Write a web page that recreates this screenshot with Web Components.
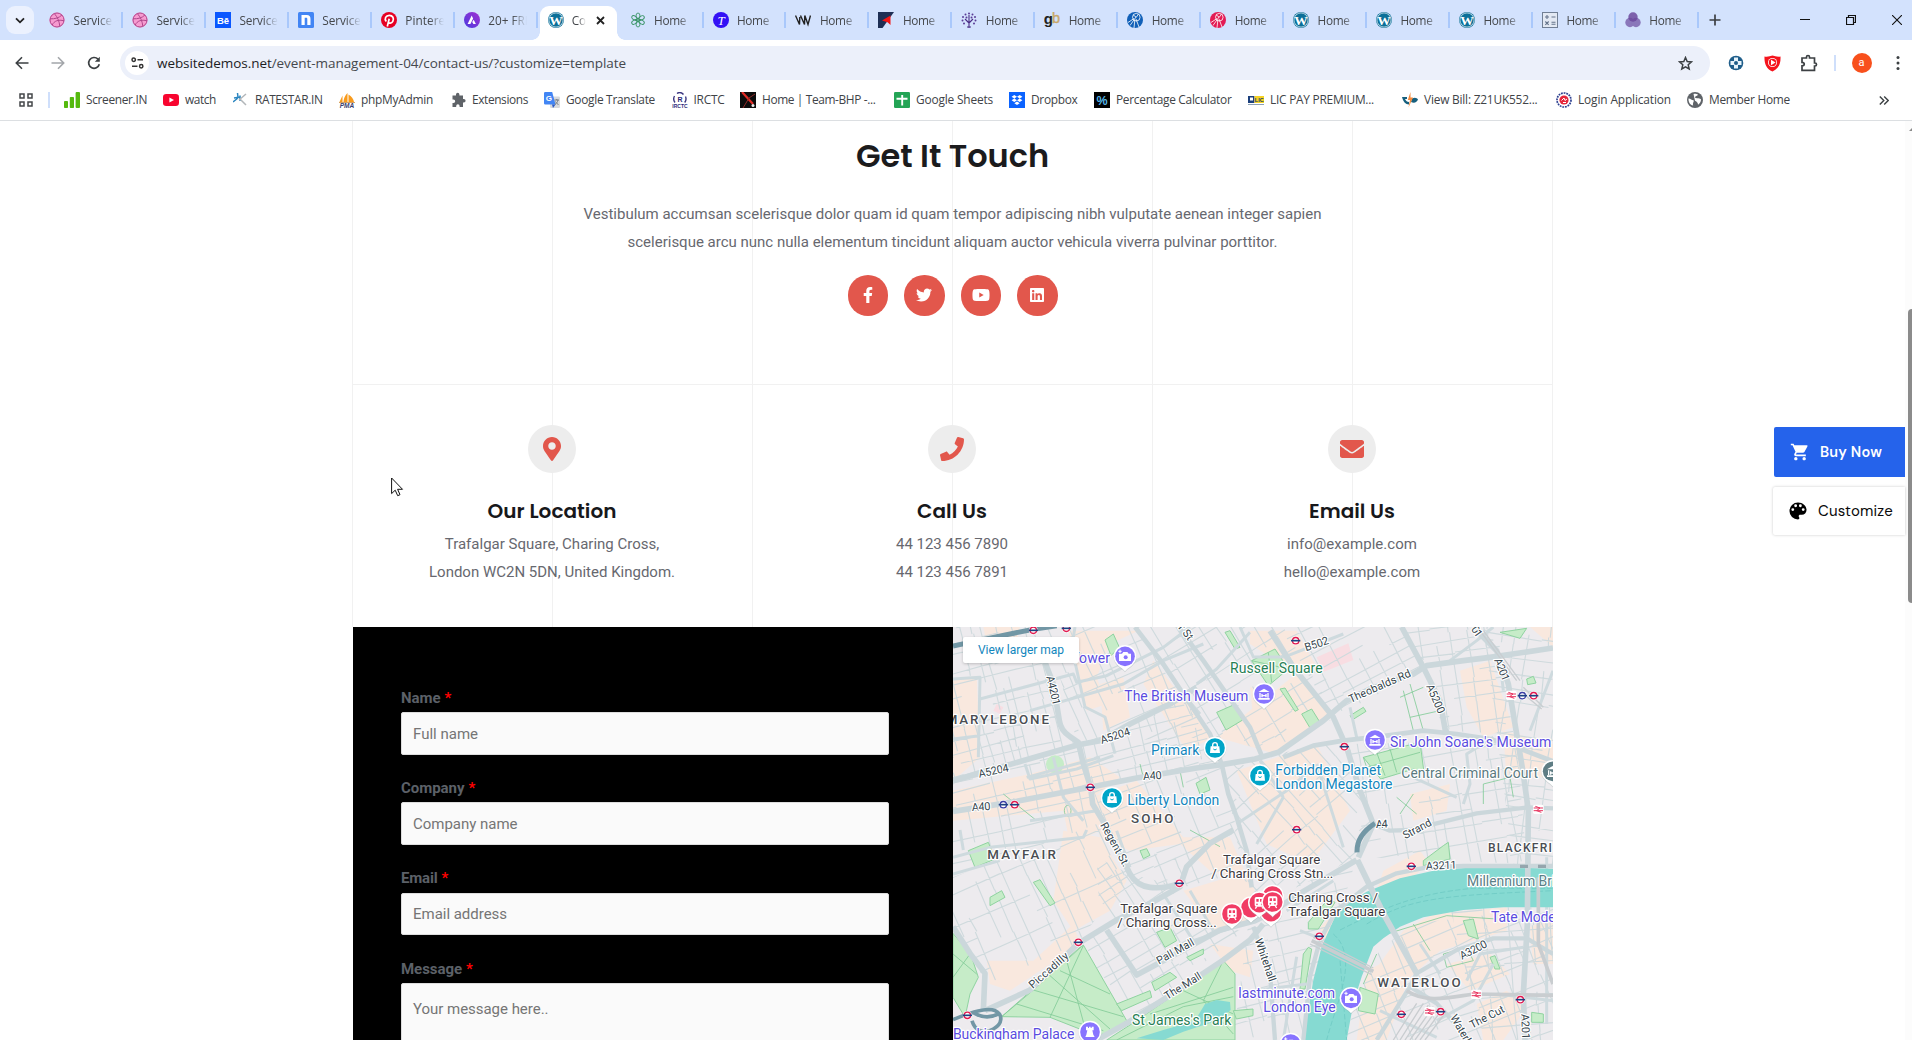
<!DOCTYPE html>
<html lang="en">
<head>
<meta charset="utf-8">
<title>Contact Us</title>
<style>
html,body{margin:0;height:1040px;overflow:hidden;background:#fff}
body{font-family:Roboto,"Liberation Sans",sans-serif}
</style>
</head>
<body>
<browser-window></browser-window>
<script>
const UI = '"Open Sans","Noto Sans",sans-serif';

/* Base element: renders markup in an open shadow root and tracks out nowrap text to its design width. */
class Base extends HTMLElement {
  connectedCallback() {
    if (!this.shadowRoot) this.attachShadow({mode: 'open'});
    this.shadowRoot.innerHTML = '<style>*{box-sizing:border-box}svg{display:block}' + this.css() + '</style>' + this.html();
    this.shadowRoot.querySelectorAll('[data-w]').forEach(el => {
      const w = +el.dataset.w, n = el.textContent.length;
      el.style.whiteSpace = 'nowrap';
      const nat = el.getBoundingClientRect().width;
      if (nat) el.style.letterSpacing = ((w - nat) / n).toFixed(3) + 'px';
    });
  }
  css() { return ''; }
  html() { return ''; }
}

const svg = (s, vb = '0 0 16 16') => `<svg width="16" height="16" viewBox="${vb}">${s}</svg>`;
const txt = (t, x, y, size, fill, fam, w = 700, extra = '') => `<text x="${x}" y="${y}" font-size="${size}" fill="${fill}" font-family="${fam}" font-weight="${w}" text-anchor="middle" ${extra}>${t}</text>`;
const ball = (bg, fg) => `<circle cx="8" cy="8" r="7.6" fill="${bg}"/><g fill="none" stroke="${fg}" stroke-width="1"><circle cx="8" cy="8" r="7"/><path d="M5.3 1.6C8.5 5 10.3 9 10.8 14.3M1.1 6.8C6 7 10 6 12.9 3M3.2 13C5.2 8.8 9.5 7.3 15 8.8"/></g>`;
const wp = () => `<circle cx="8" cy="8" r="8" fill="#0b6f98"/><circle cx="8" cy="8" r="7.1" fill="none" stroke="#fff" stroke-width=".7"/>` + txt('W', 8, 13, 13.5, '#fff', 'Liberation Serif');
const globe2 = c => `<circle cx="8" cy="8" r="8" fill="${c}"/><g fill="none" stroke="#fff" stroke-width=".8"><circle cx="9.300" cy="5.200" r="3.800"/><path d="M1 10.500 7 6.500M3 13.500 9 5M7 16 7.800 8M12 15 9 7M9.300 5.200 6 2.800M9.300 5.200 11.500 2"/></g>`;
const ICONS = {
  dribbble: svg(ball('#f79bd0', '#b0478d')),
  behance: svg('<rect width="16" height="16" fill="#0a57ff"/>' + txt('Bē', 8, 11.6, 9.5, '#fff', 'Liberation Sans')),
  namecheap: svg('<rect width="16" height="16" rx="1.5" fill="#4285f4"/><path d="M3.500 13V3H8.700C11.400 3 12.500 4.500 12.500 7V13H9.300V7.200C9.300 6.200 9 5.800 8.200 5.800H6.700V13Z" fill="#fff"/>'),
  pinterest: svg('<circle cx="8" cy="8" r="8" fill="#e60023"/><path d="M6.300 14.500 8.200 6.800M5.300 9.500C3 6.800 4.800 3.300 8.300 3.300c3.500 0 5 3.200 3.500 6-1.200 2.200-3.800 2.200-4.400.7" fill="none" stroke="#fff" stroke-width="1.700"/>'),
  astra: svg('<defs><linearGradient id="ag" x1="0" y1="1" x2="1" y2="0"><stop stop-color="#4a3be0"/><stop offset="1" stop-color="#a22fd0"/></linearGradient></defs><circle cx="8" cy="8" r="8" fill="url(#ag)"/><path d="M3.600 12 7.700 3.600 9.100 6.500 6.400 12ZM9.700 7.700 11.900 12H9.400L8.200 9.900Z" fill="#fff"/>'),
  wp: svg(wp()),
  atom: svg('<g fill="none" stroke="#3a9468" stroke-width=".9"><ellipse cx="8" cy="4" rx="2" ry="3"/><ellipse cx="8" cy="12" rx="2" ry="3"/><ellipse cx="4.500" cy="6" rx="2" ry="3" transform="rotate(-60 4.500 6)"/><ellipse cx="11.500" cy="6" rx="2" ry="3" transform="rotate(60 11.500 6)"/><ellipse cx="4.500" cy="10" rx="2" ry="3" transform="rotate(60 4.500 10)"/><ellipse cx="11.500" cy="10" rx="2" ry="3" transform="rotate(-60 11.500 10)"/><circle cx="8" cy="8" r="1.600"/></g>'),
  tee: svg('<circle cx="8" cy="8" r="8" fill="#3311f5"/>' + txt('T', 8, 12.600, 13, '#fff', 'Liberation Serif', 400, 'font-style="italic"')),
  vv: svg('<path d="M.5 3.500 4.500 12.500 4.800 5M5.500 3.500 9.500 12.500 9.800 3.500M9.800 3.500 13 12.500 15.500 3.500" fill="none" stroke="#222" stroke-width="1.400"/>'),
  kite: svg('<path d="M0 0h16L4.500 16H0Z" fill="#1e2f55"/><path d="M4 8.500 12.500 3.500V13L9.500 10.200Z" fill="#f01616"/>'),
  tree: svg('<g stroke="#4a2e86" stroke-width="1.100" fill="none"><path d="M8 7v9M8 11 4 7M8 11l4-4M8 9V3M6 15h4"/></g><g fill="#5a3c96"><circle cx="8" cy="1.500" r="1"/><circle cx="4.500" cy="2.500" r="1"/><circle cx="11.500" cy="2.500" r="1"/><circle cx="2" cy="5" r="1"/><circle cx="14" cy="5" r="1"/><circle cx="1.500" cy="8.500" r="1"/><circle cx="14.500" cy="8.500" r="1"/><circle cx="5.500" cy="5.500" r="1"/><circle cx="10.500" cy="5.500" r="1"/><circle cx="3" cy="11.500" r="1"/><circle cx="13" cy="11.500" r="1"/></g>'),
  gb: svg(txt('g', 4.200, 11.500, 15, '#222', 'Liberation Sans') + txt('b', 12, 11, 14.500, '#c9a86a', 'Liberation Sans', 400, 'stroke="#c9a86a" stroke-width=".4"')),
  gblue: svg(globe2('#1160b8')),
  gred: svg(globe2('#e31b54')),
  calc: svg('<rect x=".5" y=".5" width="15" height="15" fill="#e3e9f3" stroke="#717f94"/><path d="M3 5h4M5 3v4M9.500 5h4M3.300 9.500l3.400 3.400M6.700 9.500l-3.400 3.400M9.500 10.300h4M9.500 12.300h4" stroke="#66758c" stroke-width="1.100"/>'),
  venn: svg('<g fill="#6c4a9e" opacity=".85"><circle cx="8" cy="5" r="4.700"/></g><g fill="#6c4a9e" opacity=".7"><circle cx="5" cy="10.500" r="4.700"/><circle cx="11" cy="10.500" r="4.700"/></g>'),
  screener: svg('<g fill="#55b90e"><rect x="0" y="9" width="4" height="7" rx=".8"/><rect x="5.800" y="5" width="4.200" height="11" rx=".8"/><rect x="11.600" y="0" width="4.400" height="16" rx="1"/></g>'),
  yt: svg('<rect y="2" width="16" height="12" rx="3.200" fill="#f8052f"/><path d="M6.400 5.400v5.200L11 8Z" fill="#fff"/>'),
  rate: svg('<path d="M4.500 1 5 5.500M1 6l6-1M0 10l5-4M7 3.500V9" stroke="#2c86c0" stroke-width="1.500" fill="none"/><path d="M6 8l7-6M7 7l6 6" stroke="#b3b7ba" stroke-width="1.500"/>'),
  pma: svg('<path d="M3.500 10V3.500L.5 10ZM8.500 10V1C6 3.500 4.500 7 4.500 10ZM9.500 10V2.500C12.500 4 14.500 7 15 10Z" fill="#f89b1d"/><path d="M0 10.500h16" stroke="#c9893a" stroke-width=".8"/>' + txt('PMA', 8, 16, 6.500, '#38406e', 'Liberation Sans', 700, 'font-style="italic"')),
  puzzle: svg('<path d="M6 2.500a1.700 1.700 0 0 1 3.400 0V3.500H13V7h.8a1.800 1.800 0 0 1 0 3.600H13V15H9.600v-1a1.700 1.700 0 0 0-3.400 0v1H2.500v-4h1a1.700 1.700 0 0 0 0-3.400h-1v-4H6Z" fill="#5f6368"/>'),
  gtr: svg('<rect x="6" y="4.500" width="10" height="11.500" rx="1.200" fill="#d8dadd"/><path d="M1.200 0h7l3.300 12.500H1.200A1.200 1.200 0 0 1 0 11.300V1.200A1.200 1.200 0 0 1 1.200 0Z" fill="#4285f4"/><path d="M8 12.500h3.500L9 16Z" fill="#2b59c3"/>' + txt('G', 4.800, 9, 8, '#fff', 'Liberation Sans') + '<path d="M10.500 8h4.500M12.800 7v1M14 8c-.5 2-1.500 3.500-3 4.500M11.500 9.500c.8 1.500 2 2.700 3 3" stroke="#6d7378" stroke-width=".9" fill="none"/>'),
  irctc: svg('<g fill="none" stroke="#3b3680" stroke-width="1.400"><path d="M5 1.500A5 5 0 0 1 11.500 2.500M2.500 4A6 6 0 0 0 3 10.500M13.500 4.500a6 6 0 0 1-.8 6"/></g>' + txt('R', 8, 9.800, 7, '#2b2a7a', 'Liberation Sans') + txt('IRCTC', 8, 16, 5, '#2b2a7a', 'Liberation Sans')),
  bhp: svg('<rect width="16" height="16" fill="#0c0c0c"/><path d="M2 0 13 12" stroke="#e02c26" stroke-width="2.200"/><path d="M15 2 9 6 3 16" stroke="#8d2a27" stroke-width="1" fill="none"/><circle cx="13" cy="13.500" r="1.500" fill="#eee"/>'),
  sheets: svg('<rect width="16" height="16" rx="1.300" fill="#23a455"/><path d="M8.200 3v10.500M2.500 6.800h11" stroke="#fff" stroke-width="1.900"/>'),
  dropbox: svg('<rect width="16" height="16" fill="#0b63ff"/><path d="m5.300 3 2.700 1.700-2.700 1.700L2.600 4.700ZM10.700 3l2.700 1.700-2.700 1.700L8 4.700ZM5.300 6.500 8 8.200 5.300 9.900 2.600 8.200ZM10.700 6.500l2.700 1.700-2.700 1.700L8 8.200ZM8 9.500l2.700 1.700L8 12.900l-2.700-1.700Z" fill="#fff"/>'),
  pct: svg('<rect width="16" height="16" fill="#000"/>' + txt('%', 8, 12.500, 12.500, '#56b8ea', 'Liberation Sans')),
  lic: svg('<rect y="4" width="6.500" height="7" fill="#1b3f7c"/><rect x="2" y="5.500" width="3" height="3" fill="#fff"/><rect x="6.500" y="4" width="9.500" height="7" fill="#f6d223"/>' + txt('LIC', 11.300, 10, 5.500, '#14386f', 'Liberation Sans') + '<path d="M0 12.500h16" stroke="#8aa0b5" stroke-width="1"/>'),
  bill: svg('<path d="M0 5h5v2H3c1 2 2 3 4 3v2.500C3.500 12.500 1 9.500 0 5ZM10 6.500c3-1.500 5-.5 6 1-1 3-4 4-7 2.500Z" fill="#17607e"/><path d="M8.500 0 5.800 8H8L6.500 15.500 11 5.500H8.500Z" fill="#f68b3d"/>'),
  login: svg('<circle cx="8" cy="8" r="7" fill="#fff" stroke="#2c3f8f" stroke-width="1.700" stroke-dasharray="1.800 .9"/><circle cx="8" cy="8" r="4.600" fill="#e5263b"/><path d="M5.500 8.500 8 6l1 2.500 2-1.500M7 10.500h3" stroke="#fff" fill="none"/>'),
  world: svg('<circle cx="8" cy="8" r="8" fill="#5f6368"/><path d="M1.500 6.500c2.500 0 3 1.800 5 1.800 1 1.500-1.200 2.300-.3 5.200C3 13 1.300 10 1.500 6.500ZM6.500 2c1.500-.5 3.500 0 4.500.8-.5 1.500-3 1.200-3 2.700 1.500 1.500 3.800-.2 6 1.700.2 2.500-1.300 4.500-3 5.600 0-2-1-3-3-4" fill="#fff"/>'),
};

class TabItem extends Base {
  css() { const a = this.hasAttribute('active'); return `
    :host{display:flex;width:82.950px;height:40px;flex:none;font:12px/15px ${UI};color:#44474b;position:relative}
    .t{display:flex;flex:1;align-items:center;gap:${a ? 8 : 8.500}px;${a ? 'height:34px;margin:6px 3px 0;padding:0 8px 6px;background:#fff;border-radius:9px 9px 0 0' : 'border-right:2px solid #a9c8fb;height:16px;margin:12px -1px 0 0;padding:0 0 0 10px'}}
    .l{overflow:hidden;white-space:nowrap;flex:none;width:${a ? 14 : 39}px;-webkit-mask:linear-gradient(90deg,#000 ${a ? 45 : 62}%,transparent)}
    .l span{font-size:11.800px}
    .x{margin-left:2px;flex:none}
    .i{flex:none;width:16px}
    .f{position:absolute;bottom:0;width:8px;height:8px}.f1{left:-5px;background:radial-gradient(circle at 0 0,transparent 7.500px,#fff 8px)}.f2{right:-5px;background:radial-gradient(circle at 100% 0,transparent 7.500px,#fff 8px)}`; }
  html() { const a = this.hasAttribute('active'), l = this.getAttribute('label'), W = {Home: 32, Service: 38.5, Pinterest: 50};
    return `${a ? '<i class="f f1"></i><i class="f f2"></i>' : ''}<div class="t"><div class="i">${ICONS[this.getAttribute('icon')]}</div><div class="l"><span ${W[l] ? `data-w="${W[l]}"` : ''}>${l}</span></div>${a ? '<svg class="x" width="9" height="9" viewBox="0 0 9 9"><path d="M1 1l7 7M8 1 1 8" stroke="#222" stroke-width="1.800"/></svg>' : ''}</div>`; }
}
customElements.define('tab-item', TabItem);

class TabStrip extends Base {
  css() { return `:host{display:flex;height:40px;background:#d3e2fd;padding-left:6px;align-items:flex-start}
    .m{width:28px;height:28px;margin:6px 5px 0 0;border-radius:9px;background:#ebf1fe;display:grid;place-items:center}
    .p{margin:13px 0 0 10px}.sp{flex:1}.w{margin-top:15px;display:flex;gap:36px;margin-right:10px}`; }
  html() {
    const t = [['dribbble','Service'],['dribbble','Service'],['behance','Service'],['namecheap','Service'],['pinterest','Pinterest'],['astra','20+ FREE'],['wp','Contact',1],['atom','Home'],['tee','Home'],['vv','Home'],['kite','Home'],['tree','Home'],['gb','Home'],['gblue','Home'],['gred','Home'],['wp','Home'],['wp','Home'],['wp','Home'],['calc','Home'],['venn','Home']];
    return `<div class="m"><svg width="10" height="7" viewBox="0 0 10 7"><path d="M1 1.300 5 5.300 9 1.300" fill="none" stroke="#222" stroke-width="1.800"/></svg></div>` +
      t.map(([i, l, a]) => `<tab-item icon="${i}" label="${l}" ${a ? 'active' : ''}></tab-item>`).join('') +
      `<svg class="p" width="14" height="14" viewBox="0 0 14 14"><path d="M7 1.500v11M1.500 7h11" stroke="#3c3f43" stroke-width="1.700"/></svg><div class="sp"></div>
      <div class="w"><svg width="10" height="10"><path d="M0 4.500h10" stroke="#111"/></svg><svg width="10" height="10"><path d="M.5 2.500h7v7h-7ZM2.500 2V.5h7v7H8" fill="none" stroke="#111" stroke-width="1.200"/></svg><svg width="10" height="10"><path d="M0 0l10 10M10 0 0 10" stroke="#111" stroke-width="1.100"/></svg></div>`;
  }
}
customElements.define('tab-strip', TabStrip);

class ToolBar extends Base {
  css() { return `:host{display:flex;height:46px;background:#fff;align-items:center;font:14px/20px ${UI};padding-left:15px}
    .nav{display:flex;gap:22px;width:105px}
    .o{width:1590px;height:34px;border-radius:17px;background:#ecf0fa;display:flex;align-items:center;padding:0 17px 0 5px}
    .c{width:24px;height:24px;border-radius:50%;background:#fff;display:grid;place-items:center;margin-right:8px}
    .u{color:#45484d;font-size:13.500px}.u b{font-weight:400;color:#1d1d1f}.sp{flex:1}
    .e{display:flex;align-items:center;margin-left:18px}
    .av{width:20px;height:20px;border-radius:50%;background:#f8501c;color:#fff;font:11px/19px Roboto;text-align:center;margin:0 24px 0 15.500px}
    .s{width:2px;height:16px;background:#cfdffb;margin-left:16px}`; }
  html() { return `<div class="nav"><svg width="14" height="14" viewBox="0 0 14 14"><path d="M13.500 7H1.500M7 1.300 1.300 7 7 12.700" fill="none" stroke="#3c4043" stroke-width="1.600"/></svg>
    <svg width="14" height="14" viewBox="0 0 14 14"><path d="M.5 7h12M7 1.300 12.700 7 7 12.700" fill="none" stroke="#a3a6aa" stroke-width="1.600"/></svg>
    <svg width="14" height="14" viewBox="0 0 14 14"><path d="M12.300 8.300A5.400 5.400 0 1 1 11 3.200" fill="none" stroke="#3c4043" stroke-width="1.700"/><path d="M12.800.7v5H7.800Z" fill="#3c4043"/></svg></div>
    <div class="o"><div class="c"><svg width="13" height="12" viewBox="0 0 13 12"><g fill="none" stroke="#333" stroke-width="1.500"><circle cx="2.700" cy="2.700" r="1.700"/><path d="M6.500 2.700H12M1 9.200h5.500"/><circle cx="10.200" cy="9.200" r="1.700"/></g></svg></div>
    <div class="u" data-w="469"><b>websitedemos.net</b>/event-management-04/contact-us/?customize=template</div><div class="sp"></div>
    <svg width="15" height="15" viewBox="0 0 15 15"><path d="m7.500 1.500 1.700 4 4.300.4-3.300 2.900 1 4.200-3.700-2.200L3.800 13l1-4.200L1.500 5.900l4.300-.4Z" fill="none" stroke="#3c4043" stroke-width="1.500"/></svg></div>
    <div class="e"><svg width="16" height="16" viewBox="0 0 16 16"><circle cx="8" cy="8" r="7.300" fill="#1f5e8a"/><path d="M6 2.500h4V6h3.500v4H10v3.500H6V10H2.500V6H6Z" fill="#e9f4fb"/><circle cx="8" cy="8" r="2" fill="#1f5e8a"/></svg>
    <svg style="margin-left:19.500px" width="17" height="17" viewBox="0 0 17 17"><path d="M.5 1.500C3 2 6 1.500 8.500.5 11 1.500 14 2 16.500 1.500c.3 7-1.500 12-8 15-6.500-3-8.300-8-8-15Z" fill="#f5141d"/><circle cx="8.500" cy="7.500" r="4.500" fill="#fff"/><circle cx="8.500" cy="7.500" r="3.700" fill="#f5141d"/><path d="M7 4.800v5.400L11.500 7.500Z" fill="#fff"/></svg>
    <svg style="margin-left:19.500px" width="18" height="18" viewBox="0 0 18 18"><path d="M2 4h4.500V3a1.500 1.500 0 0 1 3 0v1h5v5h.5a1.500 1.500 0 0 1 0 3h-.5v4.300H2v-4.500c3 0 3-3.500 0-3.500Z" fill="none" stroke="#3c4043" stroke-width="1.700"/></svg>
    <div class="s"></div><div class="av">a</div><svg width="4" height="16" viewBox="0 0 4 16"><g fill="#3c4043"><circle cx="2" cy="2.500" r="1.500"/><circle cx="2" cy="8" r="1.500"/><circle cx="2" cy="13.500" r="1.500"/></g></svg></div>`; }
}
customElements.define('tool-bar', ToolBar);

class BookmarkBar extends Base {
  css() { return `:host{display:flex;height:35px;flex:none;box-sizing:border-box;background:#fff;align-items:center;border-bottom:1px solid #dcdfe2;font:11.900px/16px ${UI};color:#404347;padding:0 23px 6px 19px}
    .s{width:2px;height:16px;background:#cfdffb;margin:0 14px 0 15px}.b{display:flex;gap:6px;flex:none}.b div{margin-top:-1px}.sp{flex:1}`; }
  html() {
    const b = [['screener','Screener.IN',61,64],['yt','watch',31,163],['rate','RATESTAR.IN',67.5,233],['pma','phpMyAdmin',72,339],['puzzle','Extensions',56,450],['gtr','Google Translate',89,544],['irctc','IRCTC',31,671.5],['bhp','Home | Team-BHP -...',113.5,740],['sheets','Google Sheets',77,894],['dropbox','Dropbox',46.5,1009],['pct','Percentage Calculator',115.5,1094],['lic','LIC PAY PREMIUM...',104,1248],['bill','View Bill: Z21UK552...',113.5,1402],['login','Login Application',93,1556],['world','Member Home',81,1687,1800]];
    return `<svg width="14" height="14" viewBox="0 0 14 14"><path d="M1 1h4v4H1ZM9 1h4v4H9ZM1 9h4v4H1ZM9 9h4v4H9Z" fill="none" stroke="#44474a" stroke-width="1.500"/></svg><i class="s"></i>` +
      b.map(([i, l, w, x], k) => `<div class="b" style="width:${(b[k + 1] ? b[k + 1][3] : 1800) - x}px">${ICONS[i]}<div><span data-w="${w}">${l}</span></div></div>`).join('') +
      `<div class="sp"></div><svg width="10" height="9" viewBox="0 0 10 9"><path d="M.8.5l4 4-4 4M5.200.5l4 4-4 4" fill="none" stroke="#3c4043" stroke-width="1.400"/></svg>`;
  }
}
customElements.define('bookmark-bar', BookmarkBar);

class SocialLinks extends Base {
  css() { return `:host{display:flex;justify-content:center;gap:16px}.c{width:40.500px;height:40.500px;border-radius:50%;background:#e2574c;display:grid;place-items:center}path{fill:#fff}`; }
  html() {
    const p = [['0 0 320 512', 'M279.140 288l14.220-92.660h-88.910v-60.130c0-25.350 12.420-50.060 52.240-50.060h40.420V6.260S260.430 0 225.360 0c-73.220 0-121.080 44.380-121.080 124.720v70.620H22.890V288h81.390v224h100.170V288z'],
      ['0 0 512 512', 'M459.370 151.716c.325 4.548.325 9.097.325 13.645 0 138.720-105.583 298.558-298.558 298.558-59.452 0-114.680-17.219-161.137-47.106 8.447.974 16.568 1.299 25.340 1.299 49.055 0 94.213-16.568 130.274-44.832-46.132-.975-84.792-31.188-98.112-72.772 6.498.974 12.995 1.624 19.818 1.624 9.421 0 18.843-1.300 27.614-3.573-48.081-9.747-84.143-51.980-84.143-102.985v-1.299c13.969 7.797 30.214 12.670 47.431 13.319-28.264-18.843-46.781-51.005-46.781-87.391 0-19.492 5.197-37.360 14.294-52.954 51.655 63.675 129.300 105.258 216.365 109.807-1.624-7.797-2.599-15.918-2.599-24.040 0-57.828 46.782-104.934 104.934-104.934 30.213 0 57.502 12.670 76.670 33.137 23.715-4.548 46.456-13.320 66.599-25.340-7.798 24.366-24.366 44.833-46.132 57.827 21.117-2.273 41.584-8.122 60.426-16.243-14.292 20.791-32.161 39.308-52.628 54.253z'],
      ['0 0 576 512', 'M549.655 124.083c-6.281-23.650-24.787-42.276-48.284-48.597C458.781 64 288 64 288 64S117.220 64 74.629 75.486c-23.497 6.322-42.003 24.947-48.284 48.597-11.412 42.867-11.412 132.305-11.412 132.305s0 89.438 11.412 132.305c6.281 23.650 24.787 41.500 48.284 47.821C117.220 448 288 448 288 448s170.780 0 213.371-11.486c23.497-6.321 42.003-24.171 48.284-47.821 11.412-42.867 11.412-132.305 11.412-132.305s0-89.438-11.412-132.305zm-317.510 213.508V175.185l142.739 81.205-142.739 81.201z'],
      ['0 0 448 512', 'M416 32H31.900C14.300 32 0 46.500 0 64.300v383.400C0 465.500 14.300 480 31.900 480H416c17.600 0 32-14.500 32-32.300V64.300c0-17.800-14.400-32.300-32-32.300zM135.400 416H69V202.200h66.500V416zm-33.200-243c-21.300 0-38.500-17.300-38.500-38.500S80.900 96 102.200 96c21.200 0 38.500 17.300 38.500 38.500 0 21.300-17.200 38.500-38.500 38.500zm282.100 243h-66.400V312c0-24.800-.5-56.700-34.500-56.700-34.600 0-39.900 27-39.900 54.900V416h-66.400V202.200h63.700v29.200h.9c8.900-16.800 30.600-34.500 62.900-34.500 67.200 0 79.700 44.300 79.700 101.900V416z']];
    return p.map(([v, d]) => `<div class="c"><svg height="16" width="${16 * v.split(' ')[2] / 512}" viewBox="${v}"><path d="${d}"/></svg></div>`).join('');
  }
}
customElements.define('social-links', SocialLinks);

class InfoBox extends Base {
  css() { return `:host{display:flex;flex-direction:column;align-items:center;width:400px;padding-top:40px;text-align:center;font:15px/28px Roboto,sans-serif;color:#67686f}
    .c{width:48px;height:48px;border-radius:50%;background:#ededed;display:grid;place-items:center}path{fill:#e2574c}
    h3{margin:24px 0 5px;font:600 20px/28px Poppins,Inter,sans-serif;color:#17181b}`; }
  html() {
    const P = {pin: ['0 0 384 512', 'M172.268 501.670C26.970 291.031 0 269.413 0 192 0 85.961 85.961 0 192 0s192 85.961 192 192c0 77.413-26.970 99.031-172.268 309.670-9.535 13.774-29.930 13.773-39.464 0zM192 272c44.183 0 80-35.817 80-80s-35.817-80-80-80-80 35.817-80 80 35.817 80 80 80z'],
      phone: ['0 0 512 512', 'M493.400 24.600l-104-24c-11.300-2.600-22.900 3.300-27.500 13.900l-48 112c-4.200 9.800-1.400 21.300 6.900 28l60.600 49.600c-36 76.700-98.900 140.500-177.200 177.200l-49.600-60.600c-6.800-8.300-18.200-11.100-28-6.900l-112 48C3.900 366.500-2 378.100.6 389.400l24 104C27.100 504.200 36.700 512 48 512c256.100 0 464-207.500 464-464 0-11.200-7.700-20.900-18.600-23.400z'],
      mail: ['0 0 512 512', 'M502.300 190.800c3.900-3.100 9.700-.2 9.700 4.700V400c0 26.500-21.500 48-48 48H48c-26.500 0-48-21.500-48-48V195.600c0-5 5.700-7.800 9.700-4.700 22.400 17.400 52.100 39.500 154.100 113.600 21.100 15.400 56.700 47.800 92.200 47.600 35.700.3 72-32.800 92.300-47.600 102-74.100 131.600-96.300 154-113.700zM256 320c23.200.4 56.600-29.200 73.400-41.400 132.700-96.300 142.800-104.700 173.400-128.700 5.800-4.500 9.200-11.500 9.200-18.900v-19c0-26.500-21.500-48-48-48H48c-26.500 0-48 21.500-48 48v19c0 7.400 3.400 14.300 9.200 18.900 30.600 23.900 40.700 32.400 173.400 128.700 16.800 12.200 50.200 41.800 73.400 41.400z']};
    const [v, d] = P[this.getAttribute('icon')], w = this.getAttribute('w').split(',');
    return `<div class="c"><svg height="24" width="${24 * v.split(' ')[2] / 512}" viewBox="${v}"><path d="${d}"/></svg></div><h3><span data-w="${w[0]}">${this.getAttribute('heading')}</span></h3><div><span data-w="${w[1]}">${this.getAttribute('a')}</span></div><div><span data-w="${w[2]}">${this.getAttribute('b')}</span></div>`;
  }
}
customElements.define('info-box', InfoBox);

class FormField extends Base {
  css() { const big = this.hasAttribute('big'); return `:host{display:block;height:90.300px;font:15px/17px Roboto,sans-serif}
    label{display:block;height:24px;padding-top:1.700px;font-weight:700;color:#5c6168}label i{color:#f00;font-style:normal;margin-left:4px}
    .in{height:${big ? 120 : 42.600}px;background:#fafafa;border:1px solid #ddd;border-radius:2px;padding:${big ? 17 : 12.500}px 11px;color:#757575}`; }
  html() { return `<label><span data-w="${this.getAttribute('lw')}">${this.getAttribute('label')}</span><i>*</i></label><div class="in"><span data-w="${this.getAttribute('pw')}">${this.getAttribute('hint')}</span></div>`; }
}
customElements.define('form-field', FormField);

class ContactForm extends Base {
  css() { return ':host{display:block;width:600px;height:413px;background:#000;padding:61px 64px 0 48px;overflow:hidden}'; }
  html() { return `<form-field label="Name" hint="Full name" lw="39.5" pw="65"></form-field><form-field label="Company" hint="Company name" lw="63.500" pw="104.500"></form-field><form-field label="Email" hint="Email address" lw="36.500" pw="94"></form-field><form-field big label="Message" hint="Your message here.." lw="61" pw="135.500"></form-field>`; }
}
customElements.define('contact-form', ContactForm);

/* Map of central London; the viewBox uses three units per CSS pixel. */
class CityMap extends Base {
  css() { return `:host{display:block;width:600px;height:413px;overflow:hidden;position:relative;background:#edebee}
    .v{position:absolute;left:10px;top:10px;width:116px;height:26px;background:#fff;border-radius:2px;box-shadow:0 1px 3px rgba(0,0,0,.2);color:#1286bd;font:12px/26px Roboto,sans-serif;text-align:center}
    text{font-family:Roboto,sans-serif;paint-order:stroke;stroke:#fff;stroke-width:7px;stroke-linejoin:round}`; }
  streets() {
    let s = 7; const r = () => (s = (s * 16807) % 2147483647) / 2147483647;
    const regions = [
      ['9,9 290,9 330,320 385,360 9,470', -14, 30, 34], ['290,9 560,9 790,340 480,350 380,350', -24, 38, 44], ['9,470 385,365 425,490 9,560', -14, 42, 46],
      ['385,365 700,220 810,410 425,490', -14, 32, 50], ['9,562 425,495 440,600 9,760', -12, 52, 44], ['9,760 440,600 540,750 380,960 110,1080 9,900', -24, 46, 56],
      ['430,500 815,430 890,740 700,790 560,770 450,560', -22, 34, 46], ['560,9 1000,9 1160,280 950,380 800,340', 58, 42, 52], ['990,9 1360,9 1420,140 1150,280', -28, 38, 48],
      ['1360,9 1640,9 1690,330 1480,320 1430,150', -8, 36, 44], ['1600,9 1809,9 1809,720 1690,720', 8, 34, 48], ['820,430 1190,340 1270,610 1220,700 900,860', -42, 34, 42],
      ['1190,360 1700,350 1730,720 1250,700', -10, 40, 44], ['380,960 540,890 880,920 560,1180', -30, 40, 54], ['900,860 1220,700 1060,1240 850,1240', -14, 44, 58],
      ['1270,1000 1380,900 1809,850 1809,1248 1180,1248', -22, 38, 46], ['1500,850 1809,850 1809,1248 1600,1248', -4, 40, 54], ['440,700 540,750 700,790 560,880 450,900', -34, 30, 36]];
    let out = '';
    regions.forEach(([pts, a, gx, gy], k) => {
      const p = pts.split(' ').map(q => q.split(',').map(Number)), cx = p.reduce((t, q) => t + q[0], 0) / p.length, cy = p.reduce((t, q) => t + q[1], 0) / p.length;
      let d = '';
      for (let y = -500; y < 500; y += gx * (.7 + r() * .8)) { let x = -500; while (x < 500) { const l = gy * (1.500 + Math.floor(r() * 6)); if (r() < .72) d += `M${x | 0} ${y | 0}l${l | 0} ${(r() * 14 - 7) | 0}`; x += l; } }
      for (let x = -500; x < 500; x += gy * (.6 + r() * .8)) { let y = -500; while (y < 500) { const l = gx * (1 + Math.floor(r() * 5)); if (r() < .75) d += `M${x | 0} ${y | 0}l${(r() * 12 - 6) | 0} ${l | 0}`; y += l; } }
      out += `<clipPath id="c${k}"><polygon points="${pts}"/></clipPath><g clip-path="url(#c${k})"><path transform="translate(${cx | 0} ${cy | 0}) rotate(${a})" d="${d}"/></g>`;
    });
    return out;
  }
  html() {
    const T = (t, x, y, w, size, fill, rot = 0, wt = 500, anchor = 'start') => `<text x="${x}" y="${y}" font-size="${size}" fill="${fill}" font-weight="${wt}" textLength="${w}" text-anchor="${anchor}" ${rot ? `transform="rotate(${rot} ${x} ${y})"` : ''}>${t}</text>`;
    const pin = (x, y, c, g) => `<g transform="translate(${x} ${y + 1})"><path d="M0 45C-7 34-34 26-34 0a34 34 0 1 1 68 0C34 26 7 34 0 45Z" fill="#9aa" opacity=".35" transform="translate(0 3)"/><path d="M0 45C-7 34-34 26-34 0a34 34 0 1 1 68 0C34 26 7 34 0 45Z" fill="#fff"/><circle r="29.500" fill="${c}"/>${g}</g>`;
    const bag = '<path d="M-13-5h26l2 20h-30Z" fill="#fff"/><path d="M-7-4v-5a7 7 0 0 1 14 0v5" fill="none" stroke="#fff" stroke-width="4"/><path d="M-5 3q5 6 10 0" fill="none" stroke="#00a5c8" stroke-width="3"/>';
    const mus = '<path d="M-17-6 0-16 17-6ZM-17 12h34v5h-34Z" fill="#fff"/><path d="M-12-3v14M12-3v14M-6 0v10M6 0v10M-6 5H6" stroke="#fff" stroke-width="4"/>';
    const cam = '<path d="M-18-8h9l4-5H7l4 5h7v22h-36Z" fill="#fff"/><circle cy="3" cx="2" r="6" fill="#8874ff"/><path d="M-15-20v10M-20-15h10" stroke="#fff" stroke-width="3"/>';
    const train = '<rect x="-14" y="-17" width="28" height="29" rx="5" fill="#fff"/><path d="M-9-11h7v8h-7ZM2-11h7v8H2Z" fill="#f13c64"/><circle cx="-7" cy="5" r="2.500" fill="#f13c64"/><circle cx="7" cy="5" r="2.500" fill="#f13c64"/><path d="M-8 12l-4 6M8 12l4 6" stroke="#fff" stroke-width="4"/>';
    const tube = (x, y, c = '#e2194f') => `<g transform="translate(${x} ${y})"><circle r="14" fill="#fff" opacity=".7"/><circle r="9.500" fill="#fff" stroke="${c}" stroke-width="4"/><path d="M-14 0h28" stroke="#1d4382" stroke-width="5"/></g>`;
    const rail = (x, y) => `<g transform="translate(${x} ${y})"><rect x="-16" y="-14" width="32" height="28" rx="5" fill="#fff"/><path d="M-14-4h28M-14 4h28M-9-9 5-4-5 4 9 9" fill="none" stroke="#e8325e" stroke-width="3"/></g>`;
    const dk = '#4a4d52', rd = '#34444c', pu = '#5a4be0', bl = '#1286bd', gn = '#278055', S = 42, R = 33;
    return `<svg width="600" height="413" viewBox="9 9 1800 1239">
    <rect x="9" y="9" width="1800" height="1239" fill="#edebee"/>
    <g fill="#f9e8de">
      <path d="M9 170 80 155 90 400 9 470ZM100 9h110l-10 40-90 10ZM355 20h210L480 60l-40 100 30 80-60 20ZM450 180l70-20 20 120-80 40ZM9 500 240 450 420 400l90 60-80 60 20 100-90 40-20-100L9 590ZM610 110l180 230-80 40-130-200Z"/>
      <path d="M425 520 560 470 700 640 840 640 900 780 780 740 690 660 540 680 450 640ZM800 340l250-200 90 140-160 110ZM900 190l170 20 50 80-200 90ZM900 20h140l60 110-60 20-140-90ZM860 440l240-80 100 200-120 160-130-60ZM1530 140l90-30 70 200-90 30-50-90ZM1380 510l120-30-10 80-100 30Z"/>
      <path d="M340 620l110 20 80 130-50 90-110 60-60-90ZM110 1010l140 0 120-110 20 60-210 140-60-20ZM700 800l200-60 30 130-130 60ZM1110 910l60-60 110-50 20-60 110-60 30 40-180 130-60 90-50 70ZM1360 920 1450 870l220-20 0 70-200 60-90 80-120 0ZM1490 1020l130-30 60 60-120 50ZM1250 1040l100-50 20 90-60 168h-90Z"/>
      <path d="M1660 320l149 40v100l-140 0ZM1740 9h69v60ZM1580 1140l90-40 60 50-70 98h-60ZM1740 910l69-30v140h-60ZM780 960l130 20-10 80-60-20Z"/>
    </g>
    <path d="M1100 100 1195 58l15 50-90 36ZM140 240l20 10-10 20-20-10Z" fill="#f8dde2"/>
    <g fill="none" stroke="#cfdadd" stroke-width="3.400">${this.streets()}</g>
    <g fill="#c6ecc8" stroke="#8fd3a0" stroke-width="3">
      <path d="M465 48 490 30l18 40-25 25ZM800 265l50-22 28 45-50 30ZM738 478l30-18 12 38-30 12ZM825 25l15-5 30 50-15 5Z"/>
      <path d="M905 110 975 75l40 60-60 50ZM990 195l15-3 40 65-10 5ZM1055 270l30-15 28 45-28 20ZM1200 275l40-25 8 12-40 25ZM1240 400l130-35 40-10 12 90-30-10-100 30ZM1650 25l80-12-20 30ZM1730 165l20-8 8 20-25 5Z"/>
      <path d="M55 680 115 655l20 50-60 25ZM120 820 155 800l10 20-45 25ZM250 775l20-8 45 70-15 8ZM620 925l40-15 20 40-35 20ZM570 680l20-6 10 20-20 10Z"/>
      <path d="M155 1178 250 1098 400 963 530 1190 480 1225 440 1235 300 1180ZM820 1010 855 1050 855 1248H470L560 1190ZM9 928 62 990 85 1060 60 1110 45 1180 9 1120Z"/>
      <path d="M500 1140 600 1100 605 1120 515 1160ZM605 1075 660 1045 680 1060 615 1100ZM710 1000 760 975 760 990 720 1010Z"/>
      <path d="M1075 895l60-70 20 10-50 80-30 0ZM1060 990l15-20 10 5-20 120-15 0ZM1230 1090l55 20-10 60-50-10ZM1540 890l30-5 15 60-30-10ZM1620 1000l15-5 15 40-15 0ZM1745 1165l35 5 0 25-35 0ZM1480 665l15-10 5 50-80 20 0-15ZM850 1160l59-5 0 20-50 10Z"/>
      <circle cx="315" cy="421" r="27" stroke="none"/>
    </g>
    <g fill="none" stroke="#82cb98" stroke-width="2.500"><path d="M155 1178 395 965M200 1140l260 80M300 1055l180 160M350 1010l60 220M400 965 300 1180M250 1098l270 80M330 1040l150 70M60 990 9 1060M80 1050 9 990M600 1170l250-80M700 1100l150 70M820 1010l-60 120 90 100M500 1248l200-100 150-30M1240 400l20 60M1280 385l25 70M1320 375l20 70M1250 430l160-45M905 110l110 25M955 85l10 90M1360 200l30 120M1380 180l40 140M1350 220l70-30M1380 280l90-20M1340 520l60 50M1350 570l40-60M1600 540l0-60 80-20 10 60M570 420l10 40M690 440l10 50M160 510l100 80M720 618l90 50M1310 930l180-55 150 10M1390 900l50 80M1280 990l-40 90M1480 990l70-20 20 40-80 20Z"/><ellipse cx="353" cy="560" rx="10" ry="16"/></g>
    <g fill="none" stroke="#cedade" stroke-linejoin="round" stroke-width="9">
      <path d="M9 165 90 160 85 400M90 225 370 150 380 175 470 155 560 110 640 70 720 9M240 260 520 180 640 110 760 60M375 9l-10 60 40 180 60 30 30 110M225 420l15 45 140-30 110-40M9 345l80-10M310 400l30 120 60 70M240 590 440 560M740 180l60-45 100-110M630 110l60 90 60 70M9 700 120 670 400 640 410 618M9 750l140-40M30 618l10 60M230 460 450 400M860 600 1010 500 1080 440M1000 520l-80 140M930 410l70 110M500 620l40 110"/>
      <path d="M1000 100 1180 30M1100 420l80 250M1200 250l20 90M1500 110l80-60 50-41M1540 540l20-60-10-90 80-50M1650 110l10 90M1520 520l-130-60M1740 320l69-180M870 9l40 90 90 0M640 810l90 140 180-60M720 800l70 120M1010 860l140-90M1050 920l130 50M910 1100l160-20M1000 1248l40-250M1640 1110l169 20M1550 1070l40-80 130-20M1460 1190l110-60 60-110M1290 1160l170 80M1410 960l60 90M1790 700v500"/>
    </g>
    <path d="M1060 1248 1090 1068 1115 968 1155 878 1200 833 1250 803 1350 763 1460 738 1600 728 1809 734V850L1660 850 1540 858 1420 880 1350 908 1300 943 1270 968 1235 1058 1210 1138 1190 1248ZM560 1243 640 1218 735 1190 765 1140 800 1128 840 1134 842 1158 800 1190 700 1223 640 1248Z" fill="#86dad2"/>
    <g fill="none" stroke="#6fcac4" stroke-width="2.500" stroke-dasharray="16 7"><path d="M1150 930c80 70 10 200-20 318M1170 918c120-60 220-110 400-125h239M1250 900c130-80 230-85 559-100M1170 1010l20 238"/></g>
    <g fill="none" stroke="#cbd7db" stroke-linejoin="round" stroke-width="17">
      <path d="M285 115 310 180 328 290Q332 320 360 338L385 355 400 420 422 490 428 540 470 610 510 690 540 750Q560 785 600 790T690 778M9 470 130 436 260 398 385 362 450 350 540 300 660 240 740 190M9 562 200 532 420 490 560 462 740 432 815 422 915 405 985 385 1120 290 1190 230 1260 195 1390 150 1430 125 1540 110 1620 100 1809 72"/>
      <path d="M1000 400 1090 365 1180 350 1310 335 1420 320 1520 330 1620 345 1700 370 1809 412M555 9 640 120 780 330 815 420 835 510 860 580 890 680 905 790M690 15 760 110 900 310 935 395" stroke-width="14"/>
      <path d="M960 20 1030 130 1150 280 1190 370 1230 500 1270 600 1225 700M1355 9 1420 130 1470 230 1487 325M1570 9 1640 80 1675 180 1700 330 1720 450 1735 560 1732 900 1720 1110 1725 1248" stroke-width="17"/>
      <path d="M105 1160 240 1098 385 958 500 888 610 833 690 788 710 728 780 658 850 618M470 918 560 1053 700 978 810 918 915 890 960 868 1050 808 1220 708M440 1248 530 1198 700 1088 820 1008 900 948 940 900M9 908 60 988 105 1048 100 1160"/>
      <path d="M1060 1248 1080 1058 1110 948 1160 858 1250 788 1340 748 1430 730 1540 726 1809 726M910 908 960 1048 975 1248M1280 1248 1380 1088 1400 1048 1520 978 1630 943 1730 943 1809 990M1380 1088 1460 1138 1560 1248M1270 600 1320 620 1380 618 1460 598 1580 568 1735 550 1809 553" stroke-width="13"/>
      <path d="M1222 708 1300 868 1400 1048" stroke-width="18"/>
    </g>
    <g fill="none" stroke="#c9cdd0"><path d="M1085 950 1270 1042M1370 1100c60 40 130 20 200 10l239 4M1765 760v200l44 120" stroke-width="11"/><path d="M1090 940 1270 1032M1080 960 1265 1052M1350 1248l70-110M1365 1248l70-105M1380 1248l70-100M1395 1248l68-95M1410 1248l65-90M1425 1248l60-80M1330 1248l70-110M1590 20l110 150M1600 20l110 150M1720 190l60 60M1715 205l60 50" stroke-width="4"/></g>
    <g fill="none" stroke="#7297a5" stroke-width="15"><path d="M9 66 130 40 250 16 320 5M1221 685C1220 650 1240 620 1275 598"/><path d="M9 1187C60 1165 110 1148 135 1160S158 1200 130 1215 75 1222 66 1190M70 1166Q110 1190 148 1168" stroke-width="11"/></g>
    <g fill="#5f7380" transform="translate(1722 727)"><path d="M-12-5h24v10h-24ZM42-5h24v10H42Z" opacity=".5"/></g>
    ${tube(250, 19)}${tube(349, 13)}${tube(421, 490)}${tube(160, 542, '#3b3fa5')}${tube(194, 542)}${tube(1037, 50)}${tube(1183, 368)}${tube(1717, 215, '#3b3fa5')}${tube(1751, 215)}${rail(1684, 214)}${rail(1765, 556)}${tube(1040, 617)}${tube(688, 778)}${tube(385, 955)}${tube(52, 1174)}${tube(1384, 727)}${tube(1108, 937)}${tube(1354, 1171)}${rail(1439, 1163)}${tube(1472, 1163)}${rail(1579, 1111)}${tube(1711, 1127)}
    ${T('A4201', 289, 158, 90, R, rd, 77, 400)}${T('A5204', 455, 360, 92, R, rd, -18, 400)}${T('A5204', 88, 461, 92, R, rd, -12, 400)}${T('A40', 66, 561, 56, R, rd, -4, 400)}${T('A40', 580, 468, 56, R, rd, -4, 400)}${T('B502', 1068, 82, 74, R, rd, -18, 400)}${T('Theobalds Rd', 1202, 237, 200, R, rd, -24, 400)}${T('A5200', 1428, 187, 92, R, rd, 66, 400)}${T('A201', 1632, 108, 70, R, rd, 68, 400)}${T('01', 1562, 16, 32, R, rd, 55, 400)}${T('r St', 684, 12, 50, R, rd, 52, 400)}
    ${T('A4', 1278, 612, 36, R, rd, -3, 400)}${T('Strand', 1366, 646, 92, R, rd, -28, 400)}${T('Regent St.', 450, 603, 146, R, rd, 61, 400)}${T('A3211', 1428, 737, 92, R, rd, -2, 400)}${T('A3200', 1536, 1007, 88, R, rd, -27, 400)}${T('Piccadilly', 248, 1095, 146, R, rd, -41, 400)}${T('Pall Mall', 627, 1022, 124, R, rd, -29, 400)}${T('The Mall', 652, 1128, 124, R, rd, -32, 400)}${T('Whitehall', 914, 948, 134, R, rd, 71, 400)}${T('The Cut', 1566, 1214, 112, R, rd, -27, 400)}${T('A201', 1714, 1170, 76, R, rd, 88, 400)}${T('Waterloo', 1500, 1180, 126, R, rd, 60, 400)}
    ${T('MARYLEBONE', -13, 299, 310, 40, dk)}${T('SOHO', 543, 596, 127, 40, dk)}${T('MAYFAIR', 112, 706, 206, 40, dk)}${T('BLACKFRIARS', 1614, 683, 272, 36, dk)}${T('WATERLOO', 1282, 1088, 250, 40, dk)}
    ${T('Tower', 364, 117, 116, S, pu, 0, 400)}${T('The British Museum', 523, 231, 372, S, pu, 0, 400)}${T('Russell Square', 840, 146, 278, S, gn, 0, 400)}${T("Sir John Soane's Museum", 1320, 369, 484, S, pu, 0, 400)}
    ${T('Primark', 603, 393, 145, S, bl, 0, 400)}${T('Liberty London', 532, 542, 276, S, bl, 0, 400)}${T('Forbidden Planet', 976, 453, 317, S, bl, 0, 400)}${T('London Megastore', 976, 495, 351, S, bl, 0, 400)}${T('Central Criminal Court', 1354, 462, 410, S, '#5b7a80', 0, 400)}
    ${T('Trafalgar Square', 819, 719, 292, 40, '#3d3a40', 0, 400)}${T('/ Charing Cross Stn...', 784, 761, 366, 40, '#3d3a40', 0, 400)}${T('Trafalgar Square', 511, 866, 291, 40, '#3d3a40', 0, 400)}${T('/ Charing Cross...', 502, 910, 298, 40, '#3d3a40', 0, 400)}${T('Charing Cross /', 1015, 833, 269, 40, '#3d3a40', 0, 400)}${T('Trafalgar Square', 1015, 875, 291, 40, '#3d3a40', 0, 400)}
    ${T('Millennium Bridge', 1551, 786, 334, S, '#5b8087', 0, 400)}${T('Tate Modern', 1623, 894, 230, S, pu, 0, 400)}${T('lastminute.com', 865, 1121, 290, S, pu, 0, 400)}${T('London Eye', 940, 1163, 217, S, pu, 0, 400)}${T("St James's Park", 546, 1202, 298, S, gn, 0, 400)}${T('Buckingham Palace', 9, 1244, 364, S, pu, 0, 400)}
    ${pin(525, 96, '#8874ff', cam)}${pin(942, 209, '#8874ff', mus)}${pin(1275, 347, '#8874ff', mus)}${pin(795, 371, '#00a5c8', bag)}${pin(486, 521, '#00a5c8', bag)}${pin(930, 454, '#00a5c8', bag)}${pin(1808, 441, '#5f7d84', mus)}${pin(1203, 1122, '#8874ff', cam)}${pin(1022, 1259, '#8874ff', cam)}
    ${pin(420, 1223, '#8874ff', '<path d="M-14 15h28l-4-7-3-13h4v-11h-6v4h-3v-4h-5v4h-3v-4h-6v11h4l-3 13Z" fill="#fff"/>')}
    ${pin(963, 862, '#f13c64', '')}${pin(968, 815, '#f13c64', '')}${pin(903, 850, '#f13c64', '')}${pin(846, 869, '#f13c64', train)}${pin(928, 835, '#f13c64', train)}${pin(968, 833, '#f13c64', train)}
    </svg><div class="v"><span data-w="86">View larger map</span></div>`;
  }
}
customElements.define('city-map', CityMap);

class SideActions extends Base {
  css() { return `:host{display:flex;flex-direction:column;gap:10px;position:absolute;left:1773px;top:427px;width:132px;font:450 15px/20px "DM Sans",Inter,sans-serif}
    div{display:flex;align-items:center}
    .b{height:50px;background:#2563eb;color:#fff;border-radius:2px 0 0 2px;padding-left:16px;gap:10px;font-weight:600;margin-left:1px;font-size:14.500px}
    .c{height:48px;background:#fff;color:#0b0b0b;border-radius:2px 0 0 2px;box-shadow:0 0 3px rgba(0,0,0,.22);padding-left:16px;gap:11px}`; }
  html() { return `<div class="b"><svg width="20" height="20" viewBox="0 0 24 24"><path fill="#fff" d="M7 18c-1.100 0-1.990.9-1.990 2S5.900 22 7 22s2-.9 2-2-.9-2-2-2zM1 2v2h2l3.600 7.590-1.350 2.450c-.16.280-.25.610-.25.960 0 1.100.9 2 2 2h12v-2H7.420c-.14 0-.25-.11-.25-.25l.03-.12.9-1.630h7.450c.75 0 1.410-.41 1.750-1.030l3.580-6.490A1 1 0 0 0 20 4H5.210l-.94-2H1zm16 16c-1.100 0-1.990.9-1.990 2s.89 2 1.990 2 2-.9 2-2-.9-2-2-2z"/></svg><span data-w="62">Buy Now</span></div>
    <div class="c"><svg width="18" height="18" viewBox="2.500 2.500 19 19"><path d="M12 3a9 9 0 0 0 0 18c.83 0 1.500-.67 1.500-1.500 0-.39-.15-.74-.39-1.010-.23-.26-.38-.61-.38-.99 0-.83.67-1.500 1.500-1.500H16a5 5 0 0 0 5-5c0-4.420-4.030-8-9-8zm-5.500 9a1.500 1.500 0 1 1 0-3 1.500 1.500 0 0 1 0 3zm3-4a1.500 1.500 0 1 1 0-3 1.500 1.500 0 0 1 0 3zm5 0a1.500 1.500 0 1 1 0-3 1.500 1.500 0 0 1 0 3zm3 4a1.500 1.500 0 1 1 0-3 1.500 1.500 0 0 1 0 3z"/></svg><span data-w="75">Customize</span></div>`; }
}
customElements.define('side-actions', SideActions);

class ScrollRail extends Base {
  css() { return ':host{display:block;width:7px;height:100%;background:#fcfcfc;padding:188px 0 0 3px;overflow:hidden;box-sizing:border-box}i{display:block;width:8px;height:294px;border-radius:4px;background:#8b8b8b}svg{margin:0 0 0 1px;position:absolute;top:126px}'; }
  html() { return '<svg width="6" height="5" viewBox="0 0 6 5"><path d="M0 5 5 0V5Z" fill="#8b8b8b"/></svg><i></i>'; }
}
customElements.define('scroll-rail', ScrollRail);

class ContactPage extends Base {
  css() { return `:host{display:block;width:1905px;height:919px;background:#fff;overflow:hidden}
    .grid{margin-left:352px;width:1201px;height:506px;background:repeating-linear-gradient(90deg,#f1f1f1 0 1px,transparent 1px 200px)}
    .hero{height:264px;border-bottom:1px solid #f1f1f1;text-align:center;padding:15px 0 0 0}
    h1{margin:0;font:600 32px/40px Poppins,Inter,sans-serif;color:#1b1b1d}
    p{margin:24px 0 19px;font:15px/28px Roboto,sans-serif;color:#67686f}
    .row{display:flex}.bot{display:flex;margin-left:353px}`; }
  html() { return `<div class="grid"><div class="hero"><h1><span data-w="193">Get It Touch</span></h1><p><span data-w="738">Vestibulum accumsan scelerisque dolor quam id quam tempor adipiscing nibh vulputate aenean integer sapien</span><br><span data-w="650">scelerisque arcu nunc nulla elementum tincidunt aliquam auctor vehicula viverra pulvinar porttitor.</span></p><social-links></social-links></div>
    <div class="row"><info-box icon="pin" heading="Our Location" a="Trafalgar Square, Charing Cross," b="London WC2N 5DN, United Kingdom." w="129,214.500,246"></info-box><info-box icon="phone" heading="Call Us" a="44 123 456 7890" b="44 123 456 7891" w="70,112,112"></info-box><info-box icon="mail" heading="Email Us" a="info@example.com" b="hello@example.com" w="86,130,136.500"></info-box></div></div>
    <div class="bot"><contact-form></contact-form><city-map></city-map></div>`; }
}
customElements.define('contact-page', ContactPage);

class BrowserWindow extends Base {
  css() { return `:host{display:flex;flex-direction:column;width:1912px;height:1040px;overflow:hidden;position:relative;background:#fff}
    .v{display:flex;height:919px}.cur{position:absolute;left:391px;top:477px}`; }
  html() { return `<tab-strip></tab-strip><tool-bar></tool-bar><bookmark-bar></bookmark-bar><div class="v"><contact-page></contact-page><scroll-rail></scroll-rail></div><side-actions></side-actions>
    <svg class="cur" width="13" height="20" viewBox="0 0 13 20"><path d="M.6 1v15.600l3.600-3.400 2.500 5.500 2.300-1-2.400-5.400h4.900Z" fill="#fff" stroke="#111" stroke-width="1"/></svg>`; }
}
customElements.define('browser-window', BrowserWindow);
</script>
</body>
</html>
